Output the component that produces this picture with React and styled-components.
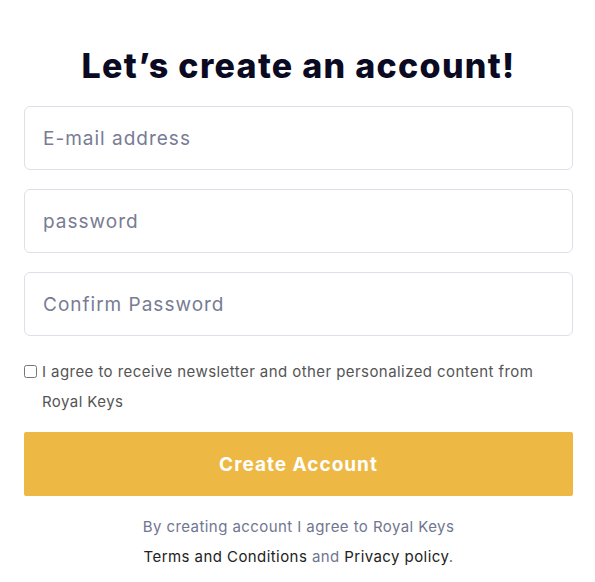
import React from "react";
import styled, { createGlobalStyle } from "styled-components";

const Global = createGlobalStyle`
  html, body { margin: 0; padding: 0; background: #fff; }
  * { box-sizing: border-box; }
`;

const Page = styled.div`
  width: 595px;
  padding: 42px 22px 0 24px;
  font-family: Inter, "Open Sans", sans-serif;
`;

const Title = styled.h1`
  margin: 0 0 16px;
  text-align: center;
  font-size: 34px;
  line-height: 48px;
  font-weight: 800;
  letter-spacing: 1.3px;
  color: #0a0a23;
`;

const Form = styled.form`
  display: flex;
  flex-direction: column;
`;

const Field = styled.input`
  height: 64px;
  width: 100%;
  border: 1px solid #dedfe8;
  border-radius: 6px;
  padding: 0 18px;
  margin-bottom: 19px;
  font-family: inherit;
  font-size: 19px;
  letter-spacing: 1px;
  color: #333;
  outline: none;
  &::placeholder { color: #777c94; }
`;

const Agree = styled.label`
  display: flex;
  align-items: flex-start;
  margin-top: 2px;
  font-size: 15px;
  line-height: 30px;
  letter-spacing: 0.43px;
  color: #555;
`;

const Box = styled.input`
  width: 13px;
  height: 13px;
  margin: 8px 5px 0 0;
  flex: none;
`;

const AgreeText = styled.span`
  max-width: 500px;
`;

const Submit = styled.button`
  margin-top: 15px;
  height: 64px;
  width: 100%;
  border: none;
  border-radius: 2px;
  background: #eeb844;
  color: #fff;
  font-family: inherit;
  font-size: 19px;
  font-weight: 700;
  letter-spacing: 1px;
`;

const Note = styled.p`
  margin: 16px 0 0;
  text-align: center;
  font-size: 15px;
  line-height: 30px;
  letter-spacing: 0.43px;
  color: #71768f;
`;

const Dark = styled.span`
  color: #222;
`;

export default function App() {
  return (
    <>
      <Global />
      <Page>
        <Title>Let’s create an account!</Title>
        <Form onSubmit={(e) => e.preventDefault()}>
          <Field type="email" placeholder="E-mail address" />
          <Field type="password" placeholder="password" />
          <Field type="password" placeholder="Confirm Password" />
          <Agree>
            <Box type="checkbox" />
            <AgreeText>
              I agree to receive newsletter and other personalized content from Royal Keys
            </AgreeText>
          </Agree>
          <Submit type="submit">Create Account</Submit>
        </Form>
        <Note>
          By creating account I agree to Royal Keys
          <br />
          <Dark>Terms and Conditions</Dark> and <Dark>Privacy policy</Dark>.
        </Note>
      </Page>
    </>
  );
}
